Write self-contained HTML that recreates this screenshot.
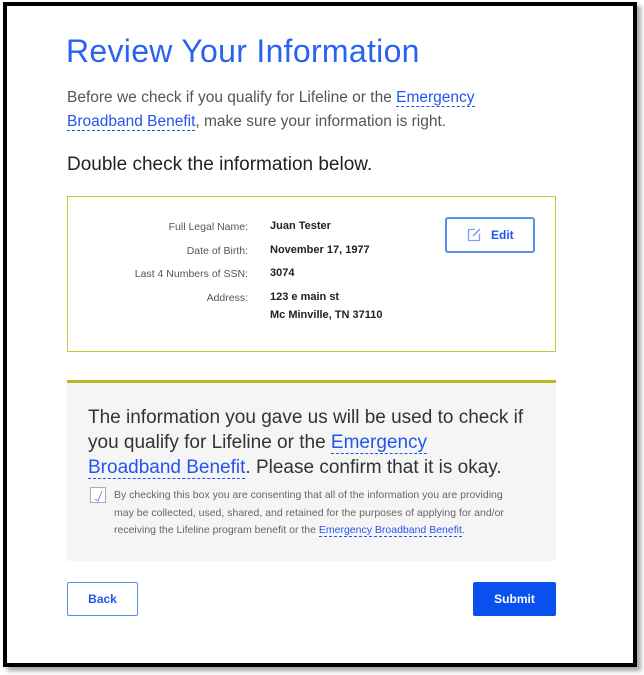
<!DOCTYPE html>
<html><head><style>
*{margin:0;padding:0;box-sizing:border-box}
body{width:644px;height:675px;background:#fff;position:relative;font-family:"Liberation Sans",sans-serif;overflow:hidden}
.frame{position:absolute;left:3px;top:2px;width:634px;height:665px;border:4px solid #000;box-shadow:4px 4px 4px #aaa}
.a{position:absolute}
.lnk{color:#2255ee;border-bottom:1px dashed #2255ee}
.lbl{position:absolute;width:150px;text-align:right;font-size:10.5px;color:#555;left:98px}
.val{position:absolute;left:270px;font-size:11px;font-weight:bold;color:#222}
</style></head><body>
<div class="frame"></div>
<div class="a" style="left:66px;top:33px;font-size:32px;color:#2a62f2;font-weight:300;letter-spacing:0.3px">Review Your Information</div>
<div class="a" style="left:67px;top:86px;width:470px;font-size:15.5px;line-height:24px;color:#555">Before we check if you qualify for Lifeline or the <span class="lnk">Emergency</span><br><span class="lnk">Broadband Benefit</span>, make sure your information is right.</div>
<div class="a" style="left:67px;top:154px;font-size:19px;color:#222">Double check the information below.</div>
<div class="a" style="left:67px;top:196px;width:489px;height:156px;border:1px solid #c8c838"></div>
<div class="lbl" style="top:221px">Full Legal Name:</div><div class="val" style="top:220px">Juan Tester</div>
<div class="lbl" style="top:245px">Date of Birth:</div><div class="val" style="top:244px">November 17, 1977</div>
<div class="lbl" style="top:268px">Last 4 Numbers of SSN:</div><div class="val" style="top:267px">3074</div>
<div class="lbl" style="top:292px">Address:</div><div class="val" style="top:291px">123 e main st</div>
<div class="val" style="top:309px">Mc Minville, TN 37110</div>
<div class="a" style="left:445px;top:217px;width:90px;height:36px;border:2px solid #5b8ef0;border-radius:3px;color:#2255ee;font-weight:bold;font-size:12px;line-height:32px;padding-left:44px">Edit
<svg class="a" style="left:20px;top:9px" width="15" height="14" viewBox="0 0 15 14"><path d="M8 1.5H1.5V12.5H12.5V6" fill="none" stroke="#7aa2f0" stroke-width="1.3"/><path d="M6 8L13 1" stroke="#7aa2f0" stroke-width="1.5"/></svg></div>
<div class="a" style="left:67px;top:380px;width:489px;height:181px;background:#f5f5f5;border-top:3px solid #b8b820"></div>
<div class="a" style="left:88px;top:405px;width:470px;font-size:19px;line-height:25px;color:#333;white-space:nowrap">The information you gave us will be used to check if<br>you qualify for Lifeline or the <span class="lnk">Emergency</span><br><span class="lnk">Broadband Benefit</span>. Please confirm that it is okay.</div>
<div class="a" style="left:90px;top:487px;width:16px;height:16px;border:1px solid #aaa;background:#fff"><svg width="14" height="14"><path d="M4 11L7 13L11 3" fill="none" stroke="#5b8ef0" stroke-width="1"/></svg></div>
<div class="a" style="left:114px;top:487px;width:440px;font-size:10.5px;line-height:17.5px;color:#666;white-space:nowrap">By checking this box you are consenting that all of the information you are providing<br>may be collected, used, shared, and retained for the purposes of applying for and/or<br>receiving the Lifeline program benefit or the <span class="lnk">Emergency Broadband Benefit</span>.</div>
<div class="a" style="left:67px;top:582px;width:71px;height:34px;border:1px solid #5b8ef0;border-radius:2px;color:#2255ee;font-weight:bold;font-size:12px;line-height:32px;text-align:center">Back</div>
<div class="a" style="left:473px;top:582px;width:83px;height:34px;background:#0a50ee;border-radius:2px;color:#fff;font-weight:bold;font-size:12px;line-height:34px;text-align:center">Submit</div>
</body></html>
